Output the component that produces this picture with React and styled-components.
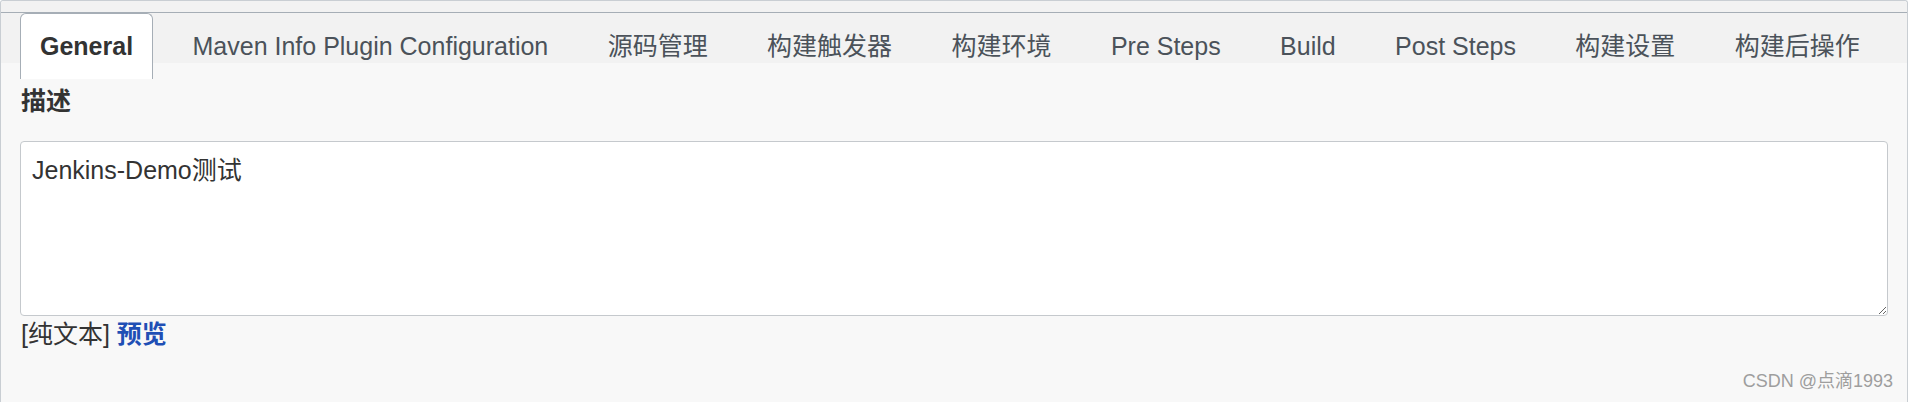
import React from "react";
import styled, { createGlobalStyle } from "styled-components";

const GlobalStyle = createGlobalStyle`
  html, body {
    margin: 0;
    padding: 0;
    background: #ffffff;
  }
  body {
    font-family: "Liberation Sans", "Noto Sans CJK SC", sans-serif;
  }
  * { box-sizing: border-box; }
`;

const Page = styled.div`
  position: relative;
  width: 1908px;
  height: 402px;
  overflow: hidden;
`;

const Panel = styled.div`
  width: 1908px;
  min-height: 420px;
  border: 1px solid #c9ced3;
  border-bottom: none;
  border-radius: 3px 3px 0 0;
  background: #f8f8f8;
`;

const TopStrip = styled.div`
  height: 12px;
  background: #f2f2f2;
  border-bottom: 1px solid #a6aeb6;
  border-radius: 3px 3px 0 0;
`;

const TabRow = styled.div`
  display: flex;
  align-items: flex-start;
  gap: 19.4px;
  height: 50px;
  padding-left: 19px;
  background: #f2f2f2;
`;

const Tab = styled.div`
  position: relative;
  z-index: 1;
  height: ${(p) => (p.$active ? "66px" : "50px")};
  padding: 18px 19px 0;
  border: 1px solid ${(p) => (p.$active ? "#a6aeb6" : "transparent")};
  border-bottom: none;
  border-radius: 6px 6px 0 0;
  background: ${(p) => (p.$active ? "#ffffff" : "transparent")};
  color: ${(p) => (p.$active ? "#333333" : "#4b525a")};
  font-weight: ${(p) => (p.$active ? 700 : 400)};
  font-size: 25px;
  line-height: 29px;
  white-space: nowrap;
  cursor: pointer;
`;

const Content = styled.div`
  padding: 24px 19px 0 19px;
`;

const Label = styled.div`
  padding-left: 1px;
  font-size: 25px;
  line-height: 29px;
  font-weight: 700;
  color: #333333;
  margin-bottom: 25px;
`;

const TextArea = styled.textarea`
  display: block;
  width: 100%;
  height: 175px;
  margin: 0;
  padding: 14px 11px;
  border: 1px solid #c5c9cd;
  border-radius: 4px;
  background: #ffffff;
  font-family: "Liberation Sans", "Noto Sans CJK SC", sans-serif;
  font-size: 25px;
  line-height: 29px;
  color: #333333;
  resize: vertical;
  outline: none;
`;

const Hint = styled.div`
  margin-top: 4px;
  padding-left: 1px;
  font-size: 25px;
  line-height: 29px;
  color: #333333;
`;

const PreviewLink = styled.a`
  font-weight: 700;
  color: #1f4fb5;
  text-decoration: none;
`;

const Watermark = styled.div`
  position: absolute;
  right: 15px;
  bottom: 10px;
  font-size: 18px;
  line-height: 21px;
  color: #9e9e9e;
  white-space: nowrap;
`;

const tabs = [
  "General",
  "Maven Info Plugin Configuration",
  "源码管理",
  "构建触发器",
  "构建环境",
  "Pre Steps",
  "Build",
  "Post Steps",
  "构建设置",
  "构建后操作",
];

export default function App() {
  return (
    <>
      <GlobalStyle />
      <Page>
        <Panel>
          <TopStrip />
          <TabRow>
            {tabs.map((t, i) => (
              <Tab key={t} $active={i === 0}>
                {t}
              </Tab>
            ))}
          </TabRow>
          <Content>
            <Label>描述</Label>
            <TextArea defaultValue="Jenkins-Demo测试" />
            <Hint>
              [纯文本] <PreviewLink href="#">预览</PreviewLink>
            </Hint>
          </Content>
        </Panel>
        <Watermark>CSDN @点滴1993</Watermark>
      </Page>
    </>
  );
}
